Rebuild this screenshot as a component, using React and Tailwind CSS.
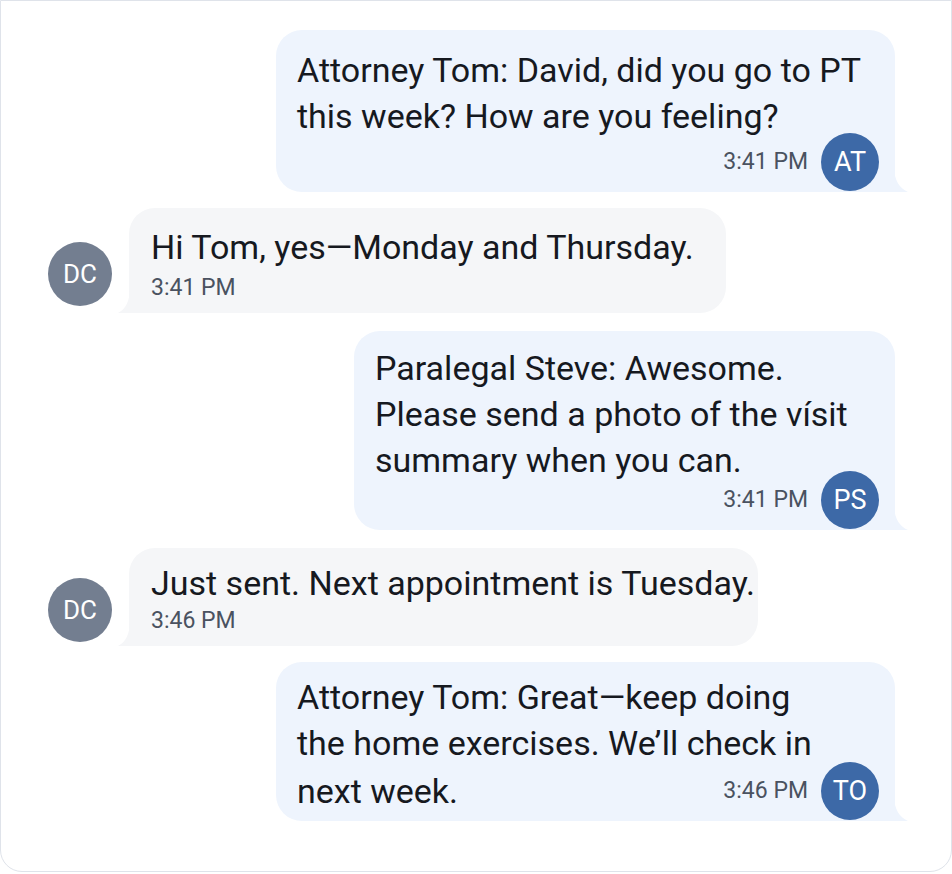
import React from "react";

const font = { fontFamily: "Roboto, 'Liberation Sans', sans-serif" };

function Avatar({ label, kind }) {
  const cls =
    kind === "blue"
      ? "w-[58px] h-[58px] bg-[#3d69a7] text-[27px]"
      : "w-[64px] h-[64px] bg-[#737e90] text-[26px]";
  return (
    <div className={`${cls} rounded-full flex items-center justify-center text-white shrink-0`}>
      {label}
    </div>
  );
}

function SentTail() {
  return (
    <svg className="absolute right-[-13px] bottom-0" width="14" height="24" viewBox="0 0 14 24">
      <path d="M0 0 C0.5 12 5 20 14 24 L0 24 Z" fill="#eef4fd" />
    </svg>
  );
}

function RecvTail() {
  return (
    <svg className="absolute left-[-11px] bottom-0" width="12" height="24" viewBox="0 0 12 24">
      <path d="M12 0 C11.5 12 8 20 0 24 L12 24 Z" fill="#f5f6f8" />
    </svg>
  );
}

function Meta({ time, avatar }) {
  return (
    <div className="flex items-center gap-[13px]">
      <span className="text-[23px] text-[#4a5260]">{time}</span>
      <Avatar label={avatar} kind="blue" />
    </div>
  );
}

function Sent({ width, lines, time, avatar, inline, pt, metaMt, mt }) {
  const body = inline ? lines.slice(0, -1) : lines;
  const last = lines[lines.length - 1];
  return (
    <div className={`flex justify-end ${mt}`}>
      <div className={`relative ${width} ${pt} bg-[#eef4fd] rounded-[26px] rounded-br-none pl-[21px] pr-[16px] pb-[1px]`}>
        <div className="text-[34px] leading-[46px] text-[#16191f] whitespace-nowrap">
          {body.map((l, i) => (
            <div key={i}>{l}</div>
          ))}
        </div>
        {inline ? (
          <div className={`flex items-center justify-between ${metaMt}`}>
            <span className="text-[34px] leading-[46px] text-[#16191f] whitespace-nowrap">{last}</span>
            <Meta time={time} avatar={avatar} />
          </div>
        ) : (
          <div className={`flex justify-end ${metaMt}`}>
            <Meta time={time} avatar={avatar} />
          </div>
        )}
        <SentTail />
      </div>
    </div>
  );
}

function Received({ width, text, time, pt, timeMt, avMb, mt }) {
  return (
    <div className={`flex items-end gap-[17px] pl-[47px] ${mt}`}>
      <div className={avMb}>
        <Avatar label="DC" kind="gray" />
      </div>
      <div className={`relative ${width} ${pt} bg-[#f5f6f8] rounded-[26px] rounded-bl-none pl-[22px] pr-[16px] pb-[10px]`}>
        <div className="text-[34px] leading-[44px] text-[#16191f] whitespace-nowrap">{text}</div>
        <div className={`text-[23px] leading-[30px] text-[#4a5260] ${timeMt}`}>{time}</div>
        <RecvTail />
      </div>
    </div>
  );
}

export default function App() {
  return (
    <div style={font} className="w-[952px] h-[874px] bg-white">
      <div className="h-[872px] border border-[#dfe3ea] rounded-b-[22px] bg-white pt-[29px] pr-[56px] flex flex-col">
        <Sent
          width="w-[619px]"
          pt="pt-[17px]"
          metaMt="-mt-[6px]"
          mt="mt-0"
          lines={["Attorney Tom: David, did you go to PT", "this week? How are you feeling?"]}
          time="3:41 PM"
          avatar="AT"
        />
        <Received
          mt="mt-[16px]"
          width="w-[597px]"
          pt="pt-[17px]"
          timeMt="mt-[4px]"
          avMb="mb-[7px]"
          text="Hi Tom, yes—Monday and Thursday."
          time="3:41 PM"
        />
        <Sent
          mt="mt-[18px]"
          width="w-[541px]"
          pt="pt-[14px]"
          metaMt="-mt-[12px]"
          lines={["Paralegal Steve: Awesome.", "Please send a photo of the vísit", "summary when you can."]}
          time="3:41 PM"
          avatar="PS"
        />
        <Received
          mt="mt-[18px]"
          width="w-[629px]"
          pt="pt-[13px]"
          timeMt="mt-[1px]"
          avMb="mb-[4px]"
          text="Just sent. Next appointment is Tuesday."
          time="3:46 PM"
        />
        <Sent
          mt="mt-[16px]"
          width="w-[619px]"
          pt="pt-[12px]"
          metaMt="-mt-[4px]"
          lines={["Attorney Tom: Great—keep doing", "the home exercises. We’ll check in", "next week."]}
          time="3:46 PM"
          avatar="TO"
          inline
        />
      </div>
    </div>
  );
}
